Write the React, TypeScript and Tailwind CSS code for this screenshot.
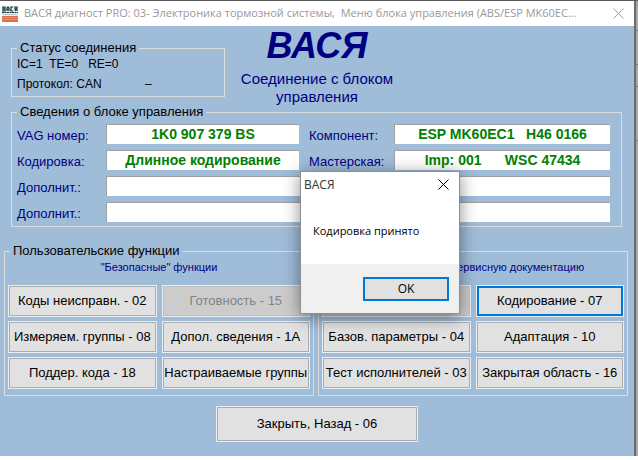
import { useState } from "react"
import clsx from "clsx"

interface FieldProps {
  id: string
  label: string
  value?: string
  right?: boolean
}

interface FunctionButton {
  label: string
  disabled?: boolean
  active?: boolean
}

const fields: FieldProps[] = [
  { id: "vag", label: "VAG номер:", value: "1K0 907 379 BS" },
  { id: "component", label: "Компонент:", value: "ESP MK60EC1   H46 0166", right: true },
  { id: "coding", label: "Кодировка:", value: "Длинное кодирование" },
  { id: "shop", label: "Мастерская:", value: "Imp: 001      WSC 47434", right: true },
]

const safeFunctions: FunctionButton[] = [
  { label: "Коды неисправн. - 02" },
  { label: "Готовность - 15", disabled: true },
  { label: "Измеряем. группы - 08" },
  { label: "Допол. сведения - 1A" },
  { label: "Поддер. кода - 18" },
  { label: "Настраиваемые группы" },
]

const serviceFunctions: FunctionButton[] = [
  { label: "Доступ - 11", disabled: true },
  { label: "Кодирование - 07", active: true },
  { label: "Базов. параметры - 04" },
  { label: "Адаптация - 10" },
  { label: "Тест исполнителей - 03" },
  { label: "Закрытая область - 16" },
]

function CloseIcon() {
  return (
    <svg width="11" height="11" viewBox="0 0 11 11" fill="none" stroke="currentColor" aria-hidden="true">
      <path d="M0.5 0.5l10 10M10.5 0.5l-10 10" />
    </svg>
  )
}

function AppIcon() {
  return (
    <svg width="16" height="16" viewBox="0 0 16 16" className="shrink-0" aria-hidden="true">
      <rect width="16" height="16" fill="#e4ebe8" />
      <path
        d="M1 1v4h2V3H1h2V1zM5 5V2l1-1 1 1v3M5 3.5h2M11 1H9v4h2M15 5V1h-2v2h2M13 5l1-2"
        fill="none"
        stroke="#173d40"
        strokeWidth="1.2"
      />
      <path d="M0 6.5h16" stroke="#173d40" strokeDasharray="2 0.5" />
      <path d="M1 8.5h14" stroke="#b9c8c6" />
      <rect y="10" width="16" height="6" fill="#d9734e" />
      <path d="M0 11.5h16M0 13.5h16" stroke="#e9a184" strokeWidth="0.6" />
    </svg>
  )
}

function Field({ id, label, value = "", right }: FieldProps) {
  return (
    <>
      <label htmlFor={id} className={clsx("pt-1 text-[13px] leading-4 text-[#000080]", right && "pl-2.5")}>
        {label}
      </label>
      <input
        id={id}
        readOnly
        defaultValue={value}
        className="h-5 w-full min-w-0 border-t border-l border-[#a0a0a0] bg-white text-center text-[14px] font-bold text-[#008000] outline-none"
      />
    </>
  )
}

function WideField({ id, label }: FieldProps) {
  return (
    <>
      <label htmlFor={id} className="pt-1 text-[13px] leading-4 text-[#000080]">
        {label}
      </label>
      <input id={id} readOnly className="col-span-3 h-5 w-full border-t border-l border-[#a0a0a0] bg-white px-1 outline-none" />
    </>
  )
}

function FunctionGrid({ buttons }: { buttons: FunctionButton[] }) {
  return (
    <div className="grid grid-cols-2 gap-x-[5px] gap-y-1">
      {buttons.map((b) => (
        <button
          key={b.label}
          type="button"
          disabled={b.disabled}
          className={clsx(
            "h-8 border border-[#e9eef3] text-[13px] whitespace-nowrap",
            b.disabled ? "bg-[#cccccc] text-[#838383]" : "bg-[#e1e1e1] text-black",
          )}
        >
          <span
            className={clsx(
              "flex h-full items-center justify-center",
              b.active ? "border-2 border-[#0078d7]" : b.disabled ? "border border-[#bfbfbf]" : "border border-[#adadad]",
            )}
          >
            {b.label}
          </span>
        </button>
      ))}
    </div>
  )
}

export default function App() {
  const [messageOpen, setMessageOpen] = useState(true)

  return (
    <div className="relative flex border-t border-[#5a5a5a] bg-white font-['Liberation_Sans',Arial,sans-serif] text-black">
      <main className="min-w-0 flex-1 bg-[#9fbcd9] pb-3.5">
        {/* Title bar */}
        <header className="flex h-[25px] items-center gap-1.5 bg-white pr-2.5 pl-0.5 text-[#999999]">
          <AppIcon />
          <h1 className="flex-1 truncate font-['Open_Sans','Noto_Sans',sans-serif] text-[11px] whitespace-pre">
            ВАСЯ диагност PRO: 03- Электроника тормозной системы,  Меню блока управления (ABS/ESP MK60EC...
          </h1>
          <button type="button" aria-label="Закрыть" className="shrink-0">
            <CloseIcon />
          </button>
        </header>

        {/* Connection status */}
        <section className="grid grid-cols-[214px_184px_1fr] pl-[11px]">
          <fieldset className="mt-4 mb-[9px] min-w-0 border border-[#dcdcdc] pl-[5px]">
            <legend className="px-[3px] text-[13px] leading-3">Статус соединения</legend>
            <p className="pt-0.5 text-[12px] leading-4 whitespace-pre">IC=1  TE=0   RE=0</p>
            <p className="pt-1 text-[12px] leading-4 whitespace-pre">Протокол: CAN             –</p>
          </fieldset>
          <div className="text-center text-[#000080]">
            <h2 className="text-[36px] leading-10 font-bold italic">ВАСЯ</h2>
            <p className="px-3 pt-1 text-[15px] leading-[18px]">Соединение с блоком управления</p>
          </div>
        </section>

        {/* Control module info */}
        <fieldset className="mr-3 ml-[11px] min-w-0 border border-[#dcdcdc] pr-[11px] pb-1 pl-[5px]">
          <legend className="px-[3px] text-[13px] leading-3">Сведения о блоке управления</legend>
          <div className="grid grid-cols-[89px_193fr_95px_216fr] gap-y-1.5 pt-1.5">
            {fields.map((f) => (
              <Field key={f.id} {...f} />
            ))}
            <WideField id="extra1" label="Дополнит.:" />
            <WideField id="extra2" label="Дополнит.:" />
          </div>
        </fieldset>

        {/* Functions */}
        <div className="mt-[18px] grid grid-cols-2 gap-x-1 pr-1.5 pl-1">
          <fieldset className="min-w-0 border border-[#dcdcdc] px-[3px] pb-1.5">
            <legend className="ml-0.5 px-[3px] text-[13px] leading-3">Пользовательские функции</legend>
            <p className="pt-0.5 pb-2.5 text-center text-[11px] leading-4 text-[#000080]">"Безопасные" функции</p>
            <FunctionGrid buttons={safeFunctions} />
          </fieldset>
          <fieldset className="mt-1.5 min-w-0 border border-[#dcdcdc] px-[3px] pb-1.5">
            <p className="pt-[7px] pb-2.5 text-center text-[11px] leading-4 text-[#000080]">
              Сначала изучите сервисную документацию
            </p>
            <FunctionGrid buttons={serviceFunctions} />
          </fieldset>
        </div>

        <button
          type="button"
          className="mx-auto mt-2.5 block h-9 w-[202px] border border-[#e9eef3] bg-[#e1e1e1] text-[13px]"
        >
          <span className="flex h-full items-center justify-center border border-[#adadad]">Закрыть, Назад - 06</span>
        </button>
      </main>

      {/* Edge of the window behind */}
      <div className="flex w-1 shrink-0 flex-col divide-y divide-[#777777] border-l-2 border-[#686c70] bg-[#a8a8a8]">
        <div className="h-[30px]" />
        <div className="h-[34px]" />
        <div className="h-[22px]" />
        <div className="h-[54px]" />
        <div className="flex-1" />
      </div>

      {messageOpen && (
        <div
          role="dialog"
          aria-labelledby="message-title"
          className="absolute top-[170px] left-[300px] w-40 border border-[#8a8f94] bg-white font-['Open_Sans','Noto_Sans',sans-serif] text-[12px] leading-4 shadow-[0_3px_16px_rgba(0,0,0,0.45)]"
        >
          <div className="flex h-[25px] items-center justify-between pr-2.5 pl-[3px]">
            <h2 id="message-title" className="text-[#333333]">ВАСЯ</h2>
            <button type="button" aria-label="Закрыть сообщение" onClick={() => setMessageOpen(false)}>
              <CloseIcon />
            </button>
          </div>
          <p className="pt-[26px] pb-[25px] pl-3 text-[11px] whitespace-nowrap">Кодировка принято</p>
          <div className="flex justify-end bg-[#f0f0f0] pt-[13px] pr-2.5 pb-3">
            <button
              type="button"
              onClick={() => setMessageOpen(false)}
              className="h-6 w-[86px] border-2 border-[#0078d7] bg-[#e1e1e1]"
            >
              OK
            </button>
          </div>
        </div>
      )}
    </div>
  )
}
